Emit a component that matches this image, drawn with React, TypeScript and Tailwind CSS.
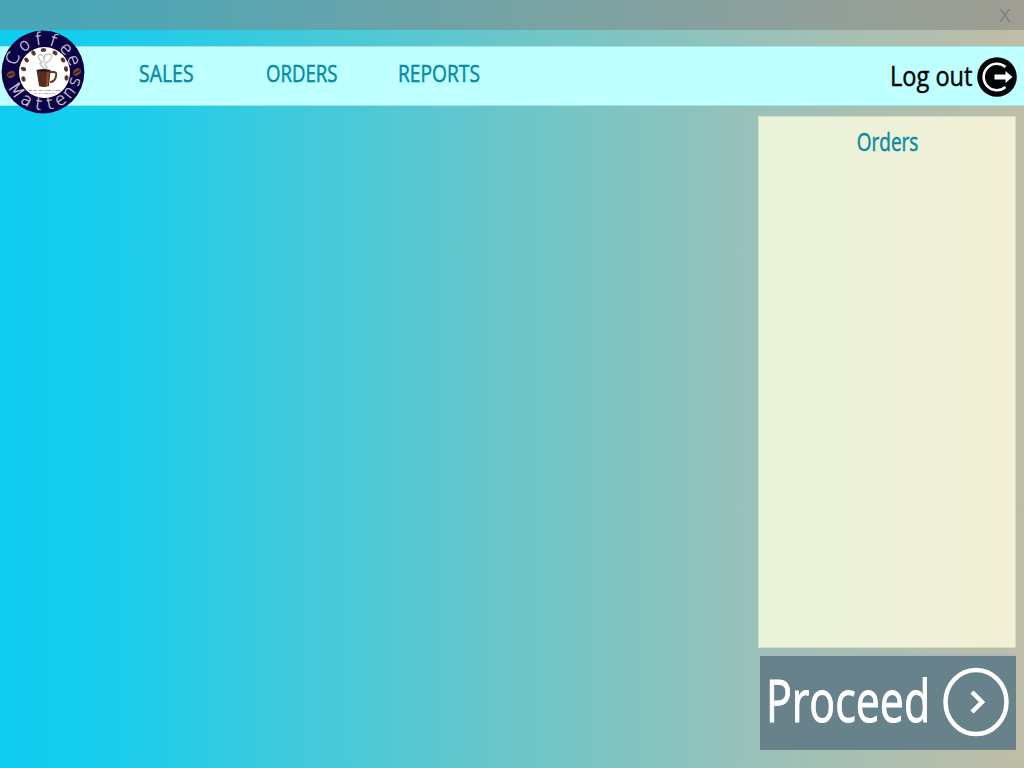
const beans: [number, number, number][] = [
  [22.5, 39, 20], [25.5, 30, 50], [32.5, 23, 60], [42.5, 20, 0], [54, 23, 30], [62, 30, 50], [65, 39, 80], [65.5, 48, 90], [22.5, 49, 70],
];

const topLetters: [string, number][] = [['C', -66], ['o', -35], ['f', -8], ['f', 18], ['e', 45], ['e', 69]];
const bottomLetters: [string, number][] = [['M', 56], ['a', 30], ['t', 8], ['t', -12], ['e', -32], ['n', -52], ['s', -73]];

function Bean({ x, y, a, s = 1 }: { x: number; y: number; a: number; s?: number }) {
  return (
    <g transform={`translate(${x} ${y}) rotate(${a}) scale(${s})`}>
      <ellipse rx="2.7" ry="2.1" fill="#754434" />
      <path d="M-2.3 0Q-.8-1 0 0T2.300 0" fill="none" stroke="#24110d" strokeWidth=".6" />
    </g>
  );
}

function Logo() {
  return (
    <svg className="-mt-[8px] block h-[84px] w-[84px] shrink-0" viewBox="0 0 84 84" aria-label="Coffee Mattens">
      <circle cx="42" cy="42" r="41.400" fill="#0c0347" />
      <circle cx="43.500" cy="42.500" r="25.500" fill="#fff" />
      <g fill="#cfcdd4" stroke="#cfcdd4" strokeWidth=".35" fontFamily="'DejaVu Sans Light', 'DejaVu Sans', sans-serif" fontWeight="200" fontSize="17" textAnchor="middle">
        {topLetters.map(([c, a], i) => <text key={i} transform={`translate(42 42) rotate(${a})`} y="-27.500">{c}</text>)}
        {bottomLetters.map(([c, a], i) => <text key={i} transform={`translate(42 42) rotate(${a})`} y="38">{c}</text>)}
      </g>
      {beans.map(([x, y, a]) => <Bean key={`${x}-${y}`} x={x} y={y} a={a} />)}
      <Bean x={10} y={44.5} a={-30} s={1.6} />
      <Bean x={76} y={42} a={-40} s={1.6} />
      <path d="M43 38c-6-4-1-5-4-8s-2-6 2-5c2 1 2 3 2 3s1-4 5-4 3 5 0 7-6 2-3 5-1 3-2 2M38 34c5-2 7-4 4-7" fill="none" stroke="#c4c4c6" strokeWidth="1.300" />
      <path d="M48 42h5q3 0 2 4-1 6-6 6" fill="none" stroke="#673724" strokeWidth="2" />
      <path d="M35.500 40h14l-1.500 16q-5 2-10 0z" fill="#56301f" />
      <path d="M46 42h2l-1 14h-2z" fill="#8d5136" />
      <ellipse cx="42.500" cy="40.300" rx="7" ry="1.200" fill="#2a1510" />
      <g fill="#333" fontFamily="'Liberation Mono', monospace" textAnchor="middle">
        <text x="43.500" y="60.500" fontSize="2" textLength="32">BECAUSE YOUR CHOICE MATTERS</text>
        <text x="43.500" y="63.700" fontSize="2" textLength="22">ALL DAY BREAKFAST</text>
      </g>
    </svg>
  );
}

export default function App() {
  return (
    <div className="flex h-[768px] w-[1024px] flex-col overflow-hidden bg-[linear-gradient(90deg,#10cdf0_0%,#16cdee_9%,#6bc6c9_50%,#9bc1b8_75%,#c0bda6_100%)] font-['Open_Sans','Noto_Sans',sans-serif]">
      <div className="flex h-[30px] items-center justify-end bg-[#808080]/50 pr-[14px]">
        <button className="w-[11px] text-[19px] leading-[30px] text-[#7e8081]"><span className="inline-block origin-left scale-x-[1.05]">X</span></button>
      </div>
      <header className="mt-4 flex h-[60px] items-center border-y border-[#a3e3e3] bg-[#beffff]">
        <div className="w-[84px] shrink-0 pl-px"><Logo /></div>
        <nav className="mt-[-6px] flex pl-[55px] text-[24px] leading-[34px] text-[#078ba3] [-webkit-text-stroke:0.5px_#078ba3]">
          <a className="w-[127px]"><span className="inline-block origin-left scale-x-[0.81]">SALES</span></a>
          <a className="w-[132px]"><span className="inline-block origin-left scale-x-[0.775]">ORDERS</span></a>
          <a className="w-[90px]"><span className="inline-block origin-left scale-x-[0.8]">REPORTS</span></a>
        </nav>
        <button className="mt-[-1px] mr-[7px] ml-auto flex items-center">
          <span className="w-[87px] text-left text-[26.5px] leading-[38px] whitespace-nowrap text-black [-webkit-text-stroke:0.4px_black]"><span className="inline-block origin-left scale-x-[0.89]">Log out</span></span>
          <svg className="mt-[2px] h-10 w-10" viewBox="0 0 40 40">
            <circle cx="20" cy="20" r="19.800" fill="#030607" />
            <path d="M28.500 10A13.200 13.200 0 1 0 28.500 30" fill="none" stroke="#fff" strokeWidth="2.600" />
            <path d="M17.500 17.500h11v-3.500l7 6-7 6v-3.500h-11z" fill="#fff" />
          </svg>
        </button>
      </header>
      <main className="flex flex-1 justify-end pt-[10px] pr-2">
        <aside className="flex w-[258px] flex-col">
          <section className="flex h-[532px] justify-center border border-[#d5dec5] bg-[linear-gradient(90deg,#e8f3da,#edf1d8_45%,#f1efd6)] pt-[7px]">
            <h2 className="pl-[2px] text-[25px] leading-[34px] text-[#078ba3] [-webkit-text-stroke:0.5px_#078ba3]"><span className="inline-block scale-x-[0.76]">Orders</span></h2>
          </section>
          <button className="mt-[6px] ml-px flex h-[96px] items-center border-t-2 border-l border-[#a9b9be] bg-[#68828b] pl-[6px] text-white">
            <span className="mt-[-6px] w-[176px] text-left text-[58px] leading-[90px] whitespace-nowrap [-webkit-text-stroke:1px_white]"><span className="inline-block origin-left scale-x-[0.74]">Proceed</span></span>
            <svg className="-mt-[2px] h-[70px] w-[68px] shrink-0" viewBox="0 0 68 70">
              <ellipse cx="34" cy="35" rx="30.500" ry="32" fill="none" stroke="#fff" strokeWidth="4.500" />
              <path d="M30 25l10 10-10 10" fill="none" stroke="#fff" strokeWidth="4.500" />
            </svg>
          </button>
        </aside>
      </main>
    </div>
  );
}
